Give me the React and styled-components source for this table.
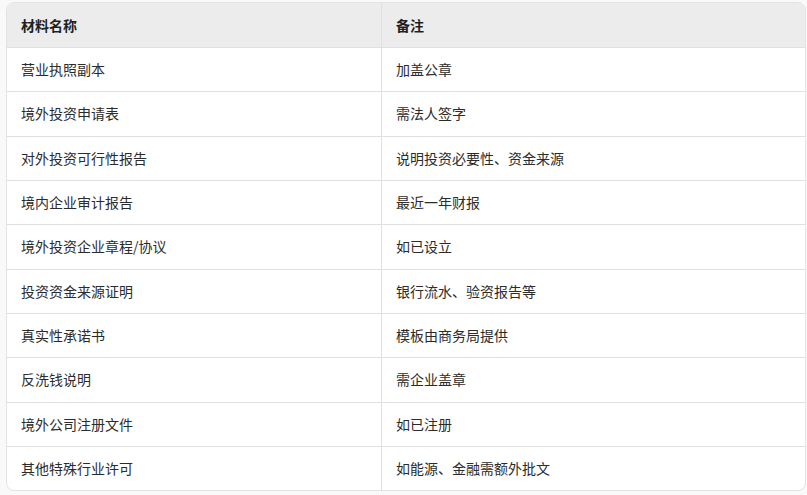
import React from "react";
import styled, { createGlobalStyle } from "styled-components";

const rows = [
  ["营业执照副本", "加盖公章"],
  ["境外投资申请表", "需法人签字"],
  ["对外投资可行性报告", "说明投资必要性、资金来源"],
  ["境内企业审计报告", "最近一年财报"],
  ["境外投资企业章程/协议", "如已设立"],
  ["投资资金来源证明", "银行流水、验资报告等"],
  ["真实性承诺书", "模板由商务局提供"],
  ["反洗钱说明", "需企业盖章"],
  ["境外公司注册文件", "如已注册"],
  ["其他特殊行业许可", "如能源、金融需额外批文"],
];

const GlobalStyle = createGlobalStyle`
  body {
    margin: 0;
    background: #f9f9f9;
    font-family: "Noto Sans CJK SC", "Liberation Sans", sans-serif;
  }
`;

const Page = styled.div`
  padding: 2px 1px 0 6px;
`;

const Table = styled.table`
  width: 800px;
  border-collapse: separate;
  border-spacing: 0;
  border: 1px solid #e3e3e3;
  border-radius: 8px;
  overflow: hidden;
  background: #fff;
  font-size: 14px;
  table-layout: fixed;
`;

const HeadCell = styled.th`
  background: #ececec;
  color: #1f1f1f;
  font-weight: 700;
  text-align: left;
  padding: 11px 14px;
  line-height: 22px;
  border-bottom: 1px solid #e0e0e0;
  border-right: ${(p) => (p.$last ? "none" : "1px solid #e0e0e0")};
  width: ${(p) => p.$w || "auto"};
`;

const Cell = styled.td`
  color: #2b2b2b;
  padding: 11px 14px;
  line-height: 21.33px;
  border-bottom: ${(p) => (p.$lastRow ? "none" : "1px solid #e0e0e0")};
  border-right: ${(p) => (p.$last ? "none" : "1px solid #e0e0e0")};
`;

export default function App() {
  return (
    <Page>
      <GlobalStyle />
      <Table>
        <thead>
          <tr>
            <HeadCell $w="346px">材料名称</HeadCell>
            <HeadCell $last>备注</HeadCell>
          </tr>
        </thead>
        <tbody>
          {rows.map(([name, note], i) => (
            <tr key={i}>
              <Cell $lastRow={i === rows.length - 1}>{name}</Cell>
              <Cell $last $lastRow={i === rows.length - 1}>{note}</Cell>
            </tr>
          ))}
        </tbody>
      </Table>
    </Page>
  );
}
